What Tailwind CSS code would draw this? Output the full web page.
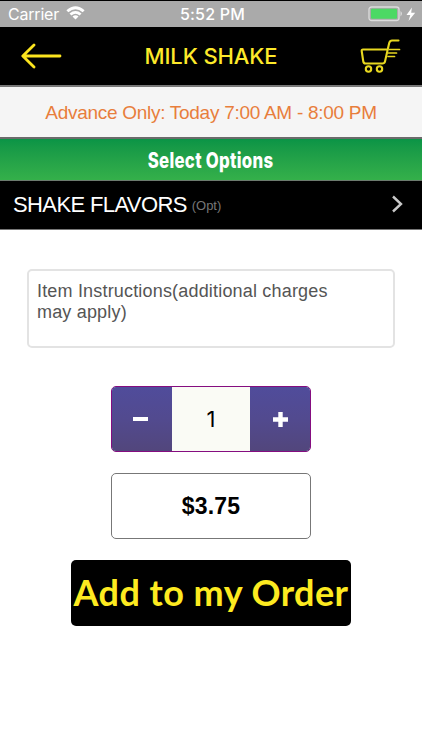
<!DOCTYPE html>
<html lang="en">
<head>
<meta charset="utf-8">
<meta name="viewport" content="width=device-width, initial-scale=1">
<title>Milk Shake</title>
<script src="https://cdn.jsdelivr.net/npm/@tailwindcss/browser@4"></script>
</head>
<body class="w-[422px] h-[750px] overflow-hidden bg-white font-['Liberation_Sans',sans-serif] whitespace-nowrap">
<div class="h-[27px] border-t border-black bg-[#aaaaaa] text-white grid grid-cols-3 items-center font-[Inter,sans-serif] text-[16px]">
  <div class="flex items-center pl-[8px] gap-[7px]">
    <span class="tracking-[-0.2px]">Carrier</span>
    <svg class="w-[19px] h-[14px] -mt-[2px]" viewBox="0 0 19 14"><path d="M.4 4.2Q9.5-3.6 18.6 4.2L16.7 6.2Q9.5.1 2.3 6.2ZM3.5 7.4Q9.5 2.6 15.5 7.4L13.6 9.4Q9.5 6.2 5.4 9.4ZM6.5 10.5Q9.5 8.2 12.5 10.5L9.5 13.5Z" fill="#fff"/></svg>
  </div>
  <div class="text-center pl-[3px] font-medium tracking-[0.2px]">5:52 PM</div>
  <div class="flex justify-end pr-[6px]">
    <svg class="w-[48px] h-[16px]" viewBox="0 0 48 16"><rect x="1" y="1" width="30" height="13.5" rx="2.5" fill="none" stroke="#dcdcdc" stroke-width="1.3"/><rect x="3" y="2.8" width="26" height="10" rx="1" fill="#4cd964"/><path d="M32.5 5q3 2.7 0 5.4z" fill="#dcdcdc"/><path d="M43.9 1.5 38.5 9h3.8l-1.8 6L47.2 6.8h-4z" fill="#fff"/></svg>
  </div>
</div>
<header class="h-[58px] bg-black flex items-center justify-between pl-[21px] pr-[21px]">
  <svg class="w-[41px] h-[26px]" viewBox="0 0 41 26"><path d="M39 13H2M13 2 1.8 13 13 24" fill="none" stroke="#fbe41e" stroke-width="2.8" stroke-linecap="round" stroke-linejoin="round"/></svg>
  <h1 class="font-[Inter,sans-serif] font-medium text-[22px] text-[#fde92a] tracking-[-0.1px]">MILK SHAKE</h1>
  <svg class="w-[41px] h-[35px] -mt-px" viewBox="0 0 41 35" fill="none" stroke="#e8d820" stroke-width="2.1" stroke-linecap="round" stroke-linejoin="round"><path d="M27 11.5H3Q1.5 11.5 1.7 13L3.2 23Q3.5 25.5 5.5 25.5H22.5Q24.5 25.5 25 23.5L29.2 5Q30 2.5 32 2.5H38.5"/><circle cx="8.5" cy="31" r="2.7"/><circle cx="19.5" cy="31" r="2.7"/><path d="M29.5 11.5H39.5M28.5 15H36.5M28 18.5H34.5" stroke-width="1.7"/></svg>
</header>
<div class="h-[54px] border-t-2 border-b-2 border-t-[#777] border-b-[#6b6b6b] bg-[#f5f5f5] flex items-center justify-center pt-[2px] text-[19px] text-[#e87e3c] tracking-[-0.28px]">Advance Only: Today 7:00 AM - 8:00 PM</div>
<div class="h-[42px] border-b border-[#6c7a6e] bg-linear-to-b from-[#0a9446] to-[#34b04a] flex items-center justify-center pt-[2px] text-white font-[Inter,sans-serif] font-extrabold text-[21px]"><span class="inline-block scale-x-[0.8] tracking-[0.35px]">Select Options</span></div>
<div class="h-[49px] border-b border-[#777] bg-black flex items-center pl-[13px] pr-[19px]">
  <span class="text-[22px] text-white tracking-[-0.62px] -mt-[2px]">SHAKE FLAVORS</span>
  <span class="text-[13px] text-[#777] ml-[5px] mt-px">(Opt)</span>
  <svg class="w-[12px] h-[18px] ml-auto -mt-[2px]" viewBox="0 0 12 18"><path d="M2 1.5 10 9 2 16.5" fill="none" stroke="#c8c8c8" stroke-width="2.4"/></svg>
</div>
<main class="flex flex-col items-center pt-[39px]">
  <div class="w-[368px] h-[79px] border-2 border-[#e3e3e3] rounded-[5px] pl-[8px] pt-[10px] text-[18px] leading-[21px] text-[#555] tracking-[0.18px]">Item Instructions(additional charges<br>may apply)</div>
  <div class="mt-[38px] w-[200px] h-[66px] border border-[#850d80] rounded-[5px] overflow-hidden flex">
    <div class="w-[60px] bg-linear-to-b from-[#504c9b] via-[#524a8f] to-[#52467c] flex items-center justify-center"><span class="w-[15px] h-[4px] bg-white mr-[3px]"></span></div>
    <div class="flex-1 bg-[#fafbf5] flex items-center justify-center text-black font-[Inter,sans-serif] text-[22px]">1</div>
    <div class="w-[60px] bg-linear-to-b from-[#504c9b] via-[#524a8f] to-[#52467c] flex items-center justify-center"><svg class="w-[15px] h-[15px]" viewBox="0 0 15 15"><path d="M0 7.5H15M7.5 0V15" stroke="#fff" stroke-width="4.4"/></svg></div>
  </div>
  <div class="mt-[21px] w-[200px] h-[66px] border border-[#777] rounded-[5px] flex items-center justify-center font-bold text-[23px] text-black tracking-[0.2px]">$3.75</div>
  <button class="mt-[21px] w-[280px] h-[66px] bg-black rounded-[5px] flex items-center justify-center font-[Lato,sans-serif] font-bold text-[36px] text-[#fdea20] tracking-[0.45px] pb-[2px]">Add to my Order</button>
</main>
</body>
</html>
